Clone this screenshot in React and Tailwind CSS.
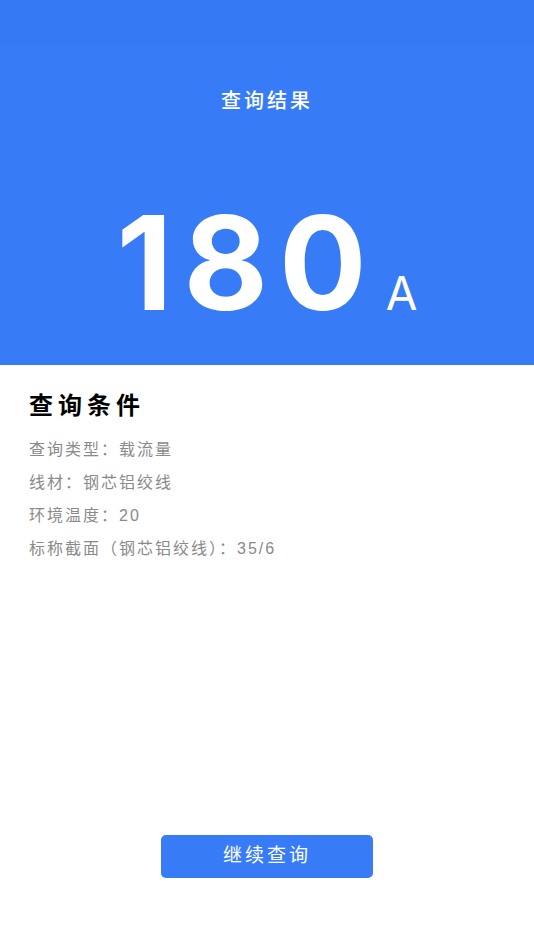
import React from "react";

const conditions = [
  { label: "查询类型", value: "载流量" },
  { label: "线材", value: "钢芯铝绞线" },
  { label: "环境温度", value: "20" },
  { label: "标称截面（钢芯铝绞线）", value: "35/6" },
];

const App = () => {
  return (
    <div
      className="w-[534px] h-[950px] bg-white flex flex-col"
      style={{ fontFamily: '"Liberation Sans", "Noto Sans CJK SC", sans-serif' }}
    >
      {/* 顶部结果区域 */}
      <div className="bg-[#377cf6] h-[365px] flex flex-col items-center">
        <div className="h-[44px] w-full bg-[#3579f5]" />
        <h1 className="mt-[45px] text-[20px] leading-[24px] font-medium tracking-[3px] text-white">查询结果</h1>
        <div className="mt-[92px] flex items-end text-white font-['Inter',sans-serif]">
          <span className="text-[130px] leading-[116px] font-bold tracking-[11px]">180</span>
          <span className="ml-[8px] mb-[8px] text-[46px] leading-[40px] font-normal">A</span>
        </div>
      </div>

      {/* 查询条件 */}
      <div className="px-[29px] pt-[27px]">
        <h2 className="text-[24px] leading-[28px] font-bold tracking-[5px] text-black">查询条件</h2>
        <div className="mt-[20px] flex flex-col gap-[13px]">
          {conditions.map((c) => (
            <p key={c.label} className="text-[16px] leading-[20px] tracking-[2px] text-[#8a8a8a]">
              {c.label}：{c.value}
            </p>
          ))}
        </div>
      </div>

      <div className="flex-1" />

      <div className="flex justify-center pb-[72px]">
        <button className="w-[212px] h-[43px] rounded-[5px] bg-[#377cf6] text-white text-[19px] tracking-[3px]">
          继续查询
        </button>
      </div>
    </div>
  );
};

export default App;
